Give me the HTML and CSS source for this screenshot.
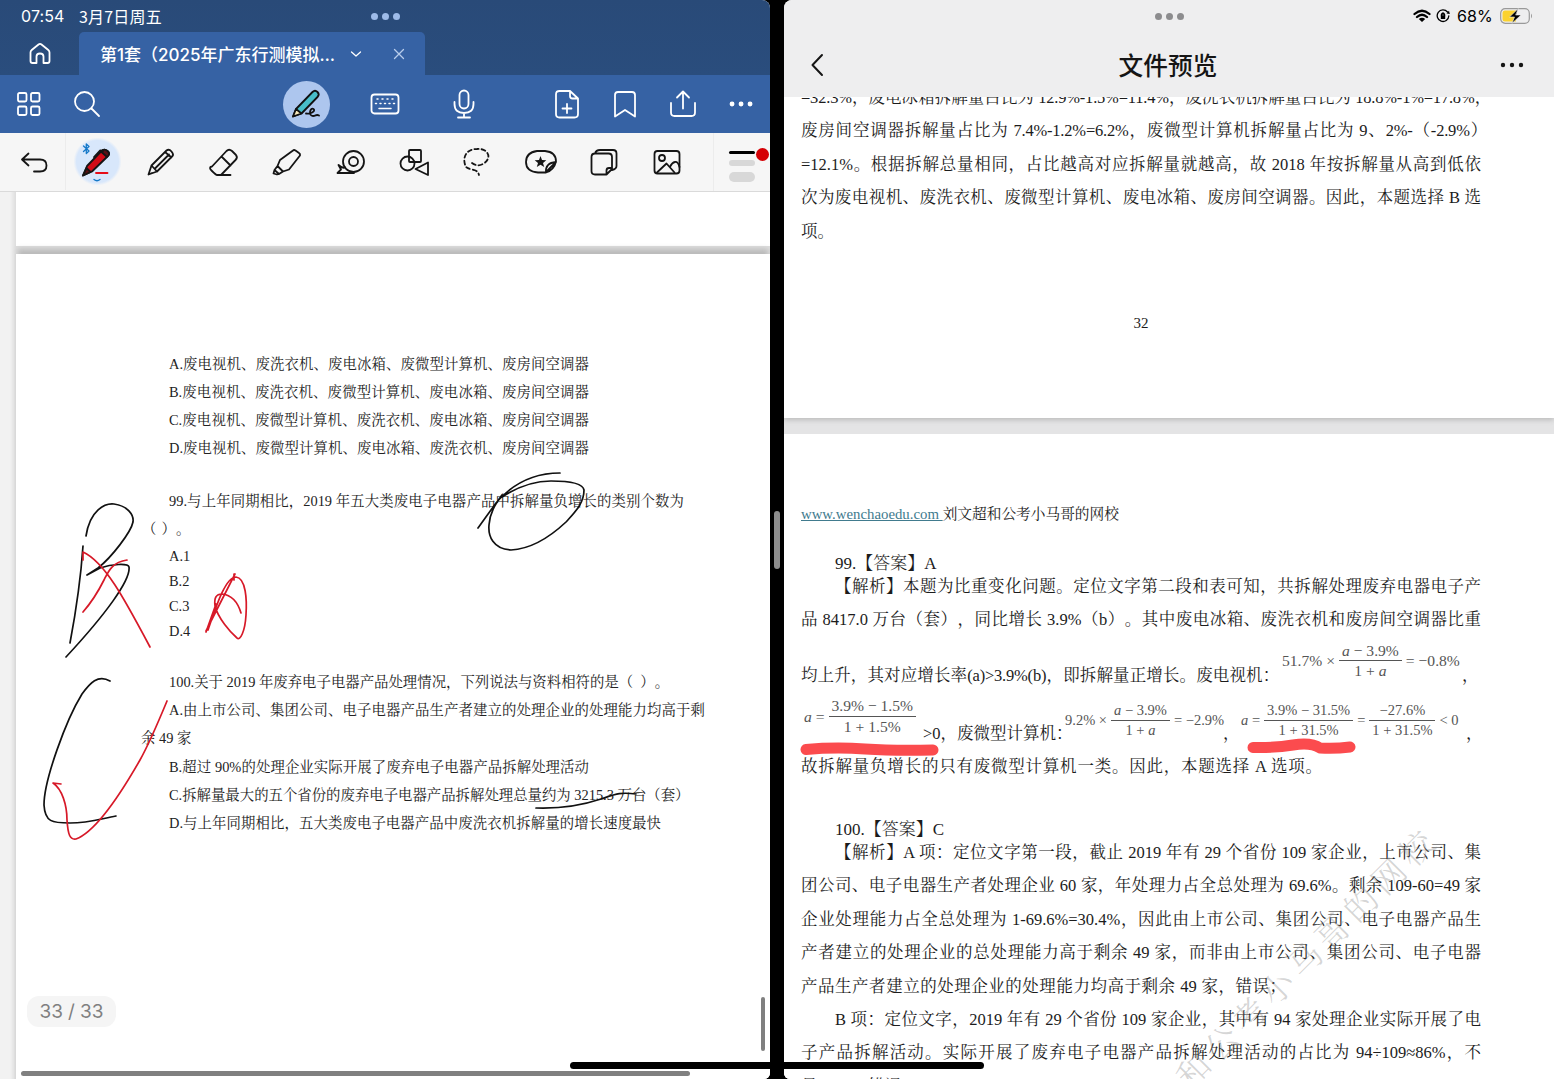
FILE: index.html
```html
<!DOCTYPE html>
<html lang="zh-CN">
<head>
<meta charset="utf-8">
<title>文件预览</title>
<link rel="stylesheet" href="styles.css">
</head>
<body>
<main class="split">
  <section class="pane notes">
    <header class="notes-head">
      <div class="status"><span class="time">07:54</span><span class="date">3月7日周五</span><span class="grip"><i></i><i></i><i></i></span></div>
      <nav class="tabs">
        <span class="home"><svg width="24" height="24" viewBox="0 0 24 24"><path d="M2.500 10.500Q2.500 9 3.700 8L10.500 2.500Q12 1.400 13.500 2.500L20.300 8Q21.500 9 21.500 10.500V19Q21.500 21 19.500 21H15.500V14.500Q15.500 11.500 12 11.500T8.500 14.500V21H4.500Q2.500 21 2.500 19Z"/></svg></span>
        <div class="tab"><span class="tab-title">第1套（2025年广东行测模拟…</span>
          <svg width="12" height="12" viewBox="0 0 12 12"><path d="M1.500 4L6 8L10.500 4"/></svg>
          <svg class="close" width="12" height="12" viewBox="0 0 12 12"><path d="M1.500 1.500L10.500 10.500M10.500 1.500L1.500 10.500"/></svg>
        </div>
      </nav>
    </header>
    <div class="bar">
      <div class="group">
        <span><svg width="36" height="36" viewBox="0 0 36 36"><rect x="7" y="7" width="8.500" height="8.500" rx="1.500"/><rect x="20" y="7" width="8.500" height="8.500" rx="1.500"/><rect x="7" y="20.500" width="8.500" height="8.500" rx="1.500"/><rect x="20" y="20.500" width="8.500" height="8.500" rx="1.500"/></svg></span>
        <span><svg width="36" height="36" viewBox="0 0 36 36"><circle cx="15.500" cy="15.500" r="9.500"/><path d="M22.500 22.500L30 30"/></svg></span>
      </div>
      <div class="group modes">
        <span><b class="active"><svg width="36" height="36" viewBox="0 0 36 36"><path class="cyan" d="M8 23L24.500 6Q27 3.500 29.500 6T29.500 11L13.500 27.500L5 30.500Z"/><path class="cream" d="M8 23L13.500 27.500L5 30.500Z"/><path class="dark" d="M18 27.500C23 28 28 25 25.500 23C22 21 20 30 25 30C28 30 28 28 31 29.500"/></svg></b></span>
        <span><svg width="36" height="36" viewBox="0 0 36 36"><rect x="4.500" y="8.500" width="27" height="19" rx="3"/><path d="M10 13h1M15 13h1M20 13h1M25 13h1M8.500 17.500h1M13 17.500h1M17.500 17.500h1M22 17.500h1M26.500 17.500h1M12 22.500H24" stroke-width="1.500"/></svg></span>
        <span><svg width="36" height="36" viewBox="0 0 36 36"><rect x="13.500" y="4.500" width="9" height="18" rx="4.500"/><path d="M8.500 16V18Q8.500 27 18 27T27.500 18V16M18 27V31.500M12 31.500H24"/></svg></span>
      </div>
      <div class="group">
        <span><svg width="36" height="36" viewBox="0 0 36 36"><path d="M21 5H10.500Q7 5 7 8.500V28Q7 31.500 10.500 31.500H25.500Q29 31.500 29 28V12.500L21 5V10Q21 12.500 23.500 12.500H29M18 18V27M13.500 22.500H22.500"/></svg></span>
        <span><svg width="36" height="36" viewBox="0 0 36 36"><path d="M8 30.500V9Q8 6 11 6H25Q28 6 28 9V30.500L18 24Z"/></svg></span>
        <span><svg width="36" height="36" viewBox="0 0 36 36"><path d="M18 22.500V6M12 11.500L18 5.500L24 11.500M6 17V26.500Q6 30 9.500 30H26.500Q30 30 30 26.500V17"/></svg></span>
        <span><svg width="36" height="36" viewBox="0 0 36 36"><path d="M9 18h.1M18 18h.1M27 18h.1" stroke-width="4.800"/></svg></span>
      </div>
    </div>
    <div class="tools">
      <span><svg width="36" height="36" viewBox="0 0 36 36"><path d="M12.500 9.500L6 15.500L12.500 21.500M6 15.500H24Q30.500 15.500 30.500 21.500T24 27.500H18"/></svg></span>
      <span class="selected"><svg width="44" height="44" viewBox="0 0 44 44"><path class="redpen" d="M8 35.500L12 26L26 11.500Q29 8 32.500 11T32 17L17 31.500Z"/><path class="cap" d="M8 35.500L11.500 28L15.500 32ZM26 11.500Q29 8 32.500 11T32 17Z"/><path class="clip" d="M19 17L25 10.500L28 11"/><path class="redline" d="M21 33H32.500"/><path class="blue" d="M8.500 6L14 11L11.300 13.500V4L14 6.500L8.500 11.500M19 39.500Q22 42 25 39.500"/></svg></span>
      <span><svg width="36" height="36" viewBox="0 0 36 36"><path d="M5.500 30.500L8.500 21.500L23.500 6.500Q26 4.500 28.500 7.500T29.500 12L14 27.500ZM8.500 21.500L14 27.500M12 24.500L26 10.500M22 8L28.500 13.500M5.500 30.500L9 29"/></svg></span>
      <span><svg width="36" height="36" viewBox="0 0 36 36"><path d="M11 31Q10 31 6 27T6 22.500L20.500 7Q23 4.500 26 7L30 11Q32 13.500 29.500 16L15 31ZM15.500 12.500L24.500 21.500M11 31H24.500"/></svg></span>
      <span><svg width="36" height="36" viewBox="0 0 36 36"><path d="M8.500 22L14 27.500L20 25.500L31 11.500Q31.500 10 30 9L26.500 6.500Q25 5.500 24 6.500L11 16ZM8.500 22L5.500 26L10 30L14 27.500M5.500 26L4.500 29.500L8 30.500L10 30M11 16L8.500 22"/></svg></span>
      <span><svg width="36" height="36" viewBox="0 0 36 36"><circle cx="20.500" cy="17.500" r="10.500"/><circle cx="20.500" cy="17.500" r="4.500"/><path d="M12 23.500Q9 24.500 5.500 21L8 25.500L4.500 29H21"/></svg></span>
      <span><svg width="36" height="36" viewBox="0 0 36 36"><rect x="13" y="6" width="12" height="12" rx="1"/><circle cx="11.500" cy="19.500" r="7"/><path d="M19.500 25L32 18.500V31Z"/></svg></span>
      <span><svg width="36" height="36" viewBox="0 0 36 36"><path stroke-dasharray="4 3" d="M13 19Q18 23 24 20C34 14 29 4 18 5C6 5 3 15 7 23Q10 25 15 26Q19 27 20 31"/></svg></span>
      <span><svg width="36" height="36" viewBox="0 0 36 36"><path d="M23 28.500H15Q3 27.500 3 18T14 7H22Q33 8 33 17.500Q31 26 23 28.500Q22 19 33 18M23 28L32 19"/><path class="solid" d="M17.500 12L19 16L23.300 16.200L20 19L21.200 23L17.500 20.700L13.800 23L15 19L11.700 16.200L16 16Z"/></svg></span>
      <span><svg width="36" height="36" viewBox="0 0 36 36"><path d="M20.500 30.500H9Q5.500 30.500 5.500 27V13Q5.500 9.500 9 9.500H22.500Q26 9.500 26 13V25ZM26 24H23Q20.500 24 20.500 26.500V30.500M9 9.500Q10 6 14 6H27Q30.500 6 30.500 9.500V22Q30.500 25 26 26"/></svg></span>
      <span><svg width="36" height="36" viewBox="0 0 36 36"><rect x="5.500" y="7" width="25" height="22.500" rx="3"/><circle cx="13" cy="14" r="3"/><path d="M8 28.500L17.500 19.500L25.500 28.500M21 23Q23 18.500 26 18T30.500 23"/></svg></span>
      <div class="strokes"><i></i><i></i><i></i><b></b></div>
    </div>
    <div class="canvas">
      <div class="sheet first"></div>
      <article class="sheet second">
        <div class="choices">
          <p class="fit">A.废电视机、废洗衣机、废电冰箱、废微型计算机、废房间空调器</p>
          <p class="fit">B.废电视机、废洗衣机、废微型计算机、废电冰箱、废房间空调器</p>
          <p class="fit">C.废电视机、废微型计算机、废洗衣机、废电冰箱、废房间空调器</p>
          <p class="fit">D.废电视机、废微型计算机、废电冰箱、废洗衣机、废房间空调器</p>
        </div>
        <div class="q99">
          <p class="fit stem">99.与上年同期相比，2019 年五大类废电子电器产品中拆解量负增长的类别个数为</p>
          <p class="outdent">（&nbsp; ）。</p>
          <div class="short"><p>A.1</p><p>B.2</p><p>C.3</p><p>D.4</p></div>
        </div>
        <div class="q100">
          <p class="fit stem">100.关于 2019 年废弃电子电器产品处理情况，下列说法与资料相符的是（&nbsp; ）。</p>
          <p class="fit wide">A.由上市公司、集团公司、电子电器产品生产者建立的处理企业的处理能力均高于剩</p>
          <p class="outdent">余 49 家</p>
          <p class="fit">B.超过 90%的处理企业实际开展了废弃电子电器产品拆解处理活动</p>
          <p class="fit opt-c">C.拆解量最大的五个省份的废弃电子电器产品拆解处理总量约为 3215.3 万台（套）</p>
          <p class="fit opt-d">D.与上年同期相比，五大类废电子电器产品中废洗衣机拆解量的增长速度最快</p>
        </div>
      </article>
    </div>
    <svg class="ink" width="770" height="1079" viewBox="0 0 770 1079">
      <g class="pen">
        <path d="M83 546Q80 590 70 643M86 536C90 510 105 503 114 504C128 506 134 515 133 522C131 532 112 557 98 568L87 575L100 568C112 564 128 563 129 567C131 580 105 615 66 657"/>
        <path d="M110 681C98 674 90 683 82 694C66 720 44 780 44 805C45 822 52 823 70 823C88 823 100 819 116 816"/>
        <path d="M478 528L496 503C513 483 533 473 560 473M502 497C522 484 540 481 551 481C572 481 583 484 584 490C584 504 574 513 566 522C550 537 530 549 511 550C493 549 488 536 489 525C490 512 495 505 502 495"/>
        <path d="M536 808C565 809 586 804 601 799S620 792 636 794"/>
      </g>
      <g class="pen red">
        <path d="M83 560L83 552C105 562 125 600 150 647M127 560C112 562 108 572 104 580C98 592 90 604 83 612"/>
        <path d="M206 631L235 574M208 630C215 610 225 577 236 577C246 578 247 600 246 615C245 632 240 641 237 638C230 632 218 618 215 606C214 598 216 594 222 594C232 595 238 603 241 613M206 632L216 604M234 580V574"/>
        <path d="M61 784L53 783C62 789 67 805 67 820C68 835 70 840 76 839C95 832 120 795 140 760C150 742 155 730 167 701"/>
      </g>
    </svg>
    <div class="counter">33 / 33</div>
    <i class="scroll-y"></i><i class="scroll-x"></i>
  </section>
  <div class="divider"><i></i></div>
  <section class="pane preview">
    <header class="preview-head">
      <div class="preview-status"><span class="grip"><i></i><i></i><i></i></span>
        <div class="system">
          <svg width="18" height="14" viewBox="0 0 18 14"><path d="M1.500 5Q9-1.500 16.500 5M4 8Q9 3.500 14 8" fill="none" stroke="#000" stroke-width="2.300"/><path d="M9 13L5.800 10Q9 7.500 12.200 10Z"/></svg>
          <svg width="14" height="14" viewBox="0 0 14 14"><path d="M11.500 3A5.800 5.800 0 1 0 12.800 7" fill="none" stroke="#000" stroke-width="1.300"/><path d="M10.500 4.500L13.800 5L13 1.800ZM4.800 6.500H9.200V10H4.800Z"/><path d="M5.700 7V5.500Q7 3 8.300 5.500V7" fill="none" stroke="#000"/></svg>
          <span>68%</span>
          <svg width="33" height="16" viewBox="0 0 33 16"><rect x=".7" y=".7" width="28.600" height="14.600" rx="4.500" fill="none" stroke="#999" stroke-width="1.200"/><path d="M5 2.500H16V13.500H5Q2.500 13.500 2.500 11V5Q2.500 2.500 5 2.500Z" fill="#fbd22e"/><path d="M18 .8L9.500 9H14.500L12 15.300L21 7H16Z" stroke="#eee" stroke-width=".6"/><path d="M31 5.500Q33 8 31 10.500Z" fill="#999"/></svg>
        </div>
      </div>
      <div class="title-row"><svg width="16" height="26" viewBox="0 0 16 26"><path d="M13 3L3.500 13L13 23"/></svg><h1>文件预览</h1><svg width="26" height="26" viewBox="0 0 26 26"><g fill="#151515" stroke="none"><circle cx="4" cy="13" r="2.200"/><circle cx="13" cy="13" r="2.200"/><circle cx="22" cy="13" r="2.200"/></g></svg></div>
    </header>
    <div class="reader">
      <article class="leaf top">
        <p class="fit over">=32.3%，废电冰箱拆解量占比为 12.9%-1.5%=11.4%，废洗衣机拆解量占比为 18.8%-1%=17.8%，</p>
        <p class="fit over">废房间空调器拆解量占比为 7.4%-1.2%=6.2%，废微型计算机拆解量占比为 9、2%-（-2.9%）</p>
        <p class="fit">=12.1%。根据拆解总量相同，占比越高对应拆解量就越高，故 2018 年按拆解量从高到低依</p>
        <p class="fit">次为废电视机、废洗衣机、废微型计算机、废电冰箱、废房间空调器。因此，本题选择 B 选</p>
        <p>项。</p>
        <div class="folio">32</div>
      </article>
      <article class="leaf next">
        <p class="source"><a>www.wenchaoedu.com </a>刘文超和公考小马哥的网校</p>
        <h2>99.【答案】A</h2>
        <p class="fit indent">【解析】本题为比重变化问题。定位文字第二段和表可知，共拆解处理废弃电器电子产</p>
        <p class="fit">品 8417.0 万台（套），同比增长 3.9%（b）。其中废电冰箱、废洗衣机和废房间空调器比重</p>
        <div class="math-row one">
          <p class="fit">均上升，其对应增长率(a)&gt;3.9%(b)，即拆解量正增长。废电视机：</p>
          <div class="math"><span>51.7% ×</span><span class="frac"><span><i>a</i> − 3.9%</span><span>1 + <i>a</i></span></span><span>= −0.8%</span></div>
          <p>，</p>
        </div>
        <div class="math-row two">
          <div class="math"><span><i>a</i> =</span><span class="frac"><span>3.9% − 1.5%</span><span>1 + 1.5%</span></span></div>
          <p class="fit">&gt;0，废微型计算机：</p>
          <div class="math small"><span>9.2% ×</span><span class="frac"><span><i>a</i> − 3.9%</span><span>1 + <i>a</i></span></span><span>= −2.9%</span></div>
          <p>，</p>
          <div class="math small"><span><i>a</i> =</span><span class="frac"><span>3.9% − 31.5%</span><span>1 + 31.5%</span></span><span>=</span><span class="frac"><span>−27.6%</span><span>1 + 31.5%</span></span><span>&lt; 0</span></div>
          <p>，</p>
        </div>
        <p class="fit ending">故拆解量负增长的只有废微型计算机一类。因此，本题选择 A 选项。</p>
        <h2 class="later">100.【答案】C</h2>
        <p class="fit indent">【解析】A 项：定位文字第一段，截止 2019 年有 29 个省份 109 家企业，上市公司、集</p>
        <p class="fit">团公司、电子电器生产者处理企业 60 家，年处理力占全总处理为 69.6%。剩余 109-60=49 家</p>
        <p class="fit">企业处理能力占全总处理为 1-69.6%=30.4%，因此由上市公司、集团公司、电子电器产品生</p>
        <p class="fit">产者建立的处理企业的总处理能力高于剩余 49 家，而非由上市公司、集团公司、电子电器</p>
        <p class="fit wrong">产品生产者建立的处理企业的处理能力均高于剩余 49 家，错误；</p>
        <p class="fit indent">B 项：定位文字，2019 年有 29 个省份 109 家企业，其中有 94 家处理企业实际开展了电</p>
        <p class="fit">子产品拆解活动。实际开展了废弃电子电器产品拆解处理活动的占比为 94÷109≈86%，不</p>
        <p>是 91%，错误。</p>
      </article>
    </div>
    <svg class="ink" width="770" height="1079" viewBox="784 0 770 1079">
      <text class="watermark" text-anchor="end" transform="translate(1441 841) rotate(-45)">刘文超和公考小马哥的网校</text>
      <path class="marker" d="M806 749.500Q835 747 865 749T933 750M1253 747.500Q1275 748 1293 745T1320 748Q1335 749 1350 747"/>
    </svg>
  </section>
</main>
<i class="home-indicator"></i>
</body>
</html>
```
FILE: styles.css
```css
* { box-sizing: border-box; }
body { margin: 0; width: 1554px; height: 1079px; overflow: hidden; background: #000; font-family: "Inter", "Noto Sans CJK SC", sans-serif; }
p, h1, h2 { margin: 0; font-weight: 400; white-space: nowrap; }
svg { display: block; flex: none; fill: none; stroke: #fff; stroke-width: 1.8; stroke-linecap: round; stroke-linejoin: round; }
.split { display: flex; height: 1079px; }
.pane { position: relative; width: 770px; height: 1079px; overflow: hidden; border-radius: 6px 8px 6px 6px; display: flex; flex-direction: column; background: #fff; }
.notes { border-radius: 0 8px 6px 0; }
.preview { border-radius: 8px 0 0 6px; }
.divider { width: 14px; display: flex; align-items: center; justify-content: center; }
.divider i { width: 6px; height: 58px; border-radius: 3px; background: #8d8d8d; }
.grip { display: flex; gap: 4px; }
.grip i { width: 7px; height: 7px; border-radius: 50%; background: #9dbbe9; }

/* note app chrome */
.notes-head { flex: none; height: 75px; background: linear-gradient(#294a78, #2a4d7d); color: #fff; }
.status { height: 32px; padding-left: 21px; display: grid; grid-template-columns: 58px 292px 1fr; align-items: center; font-size: 16px; }
.time { letter-spacing: .1px; }
.date { font-size: 16px; letter-spacing: .2px; font-family: "Noto Sans CJK SC", sans-serif; }
.tabs { display: flex; height: 43px; }
.home { width: 79px; display: grid; place-items: center; }
.tab { width: 346px; padding: 0 20px 0 21px; background: #3662a4; border-radius: 5px 5px 0 0; display: flex; align-items: center; }
.tab-title { width: 250px; font: 500 17px "Inter", "Noto Sans CJK SC", sans-serif; white-space: nowrap; }
.tab svg { stroke-width: 1.3; }
.tab .close { margin-left: 31px; stroke: #b8cdec; }
.bar { flex: none; height: 58px; background: #3662a4; display: flex; justify-content: space-between; }
.group { display: flex; }
.group span { width: 58px; display: grid; place-items: center; }
.modes { margin-left: 116px; }
.modes span { width: 79px; }
.group:first-child + .modes { margin-left: 0; transform: translateX(58px); }
.active { width: 47px; height: 47px; border-radius: 50%; background: #adc6ee; display: grid; place-items: center; }
.cyan { fill: #48bdc9; stroke: #111; }
.cream { fill: #f8eabb; stroke: #111; }
.dark { stroke: #111; }
.tools { flex: none; height: 59px; padding-left: 2.5px; background: #f6f6f6; border-bottom: 1px solid #dadada; display: flex; }
.tools span { width: 63.3px; height: 57px; display: grid; place-items: center; }
.tools span:first-child { border-right: 1px solid #ececec; }
.tools svg { stroke: #151515; }
.tools .selected { background: radial-gradient(circle, #d8e7fb 0 21px, #f6f6f600 24px); }
.tools .redpen { fill: #d20b16; }
.tools .cap { fill: #5a1014; }
.tools .redline { stroke: #e60d18; }
.tools .blue { stroke: #1478c8; stroke-width: 1.3; }
.tools .solid { fill: #151515; stroke: none; }
.strokes { flex: 1; border-left: 1px solid #ececec; margin-left: 14px; display: grid; grid-template-columns: 26px 13px; grid-template-rows: 3px 6px 10px; gap: 6px 1px; padding: 18px 0 0 15px; }
.strokes i { grid-column: 1; border-radius: 5px; background: #d8d8d8; }
.strokes i:first-child { background: #000; }
.strokes b { grid-column: 2; grid-row: 1; align-self: center; position: relative; top: 2px; width: 13px; height: 13px; border-radius: 50%; background: #d50005; }
.canvas { flex: 1; min-height: 0; padding-left: 16px; background: linear-gradient(90deg, #f2f2f2 0 10px, #ddd 16px); }
.sheet { background: #fff; font: 14.4px/28px "Liberation Serif", "Noto Serif CJK SC", "Noto Sans CJK SC", serif; color: #222; font-weight: 300; text-spacing-trim: space-all; }
.first { height: 54px; }
.second { margin-top: 8px; height: 840px; padding: 96px 0 0 153px; box-shadow: 0 -7px 5px -2px #bbb; }
.fit { text-align: justify; text-align-last: justify; }
.sheet .fit { width: 420px; }
.q99 { margin-top: 25px; }
.sheet .q99 .stem { width: 515px; }
.outdent { margin-left: -28px; }
.q99 .outdent { margin-left: -27px; word-spacing: -1px; }
.short { padding-top: 1px; line-height: 25px; }
.q100 { margin-top: 24px; line-height: 28.2px; }
.sheet .q100 .stem { width: 497px; }
.sheet .wide { width: 536px; }
.sheet .opt-c { width: 519px; }
.sheet .opt-d { width: 492px; }
.ink { position: absolute; inset: 0; pointer-events: none; }
.pen { stroke: #111; stroke-width: 1.7; }
.red { stroke: #d71928; }
.counter { position: absolute; left: 27px; top: 996px; width: 89px; height: 31px; border-radius: 12px; background: #f5f5f5; color: #808080; font-size: 19px; line-height: 31px; text-align: center; letter-spacing: -.1px; }
.scroll-y { position: absolute; left: 761px; top: 997px; width: 4px; height: 54px; border-radius: 2px; background: #808080; }
.scroll-x { position: absolute; left: 21px; top: 1071px; width: 669px; height: 5px; border-radius: 3px; background: #808080; }

/* document preview */
.preview-head { position: relative; z-index: 2; height: 97px; flex: none; background: #eeeeef; }
.preview-status { height: 32px; display: grid; grid-template-columns: 371px 258px 1fr; align-items: center; }
.preview-status .grip { grid-column: 2; }
.preview-status .grip i { background: #8c8c8e; }
.system { display: flex; align-items: center; gap: 5px; font-size: 16px; }
.system svg { stroke: none; fill: #000; }
.system span { width: 39px; margin-left: 2px; margin-right: -1px; letter-spacing: .1px; }
.title-row { height: 65px; padding: 0 29px 0 25px; display: grid; grid-template-columns: 16px 1fr 26px; align-items: center; }
.title-row svg { stroke: #151515; stroke-width: 2; }
h1 { padding-left: 12px; font: 500 24.7px/36px "Noto Sans CJK SC", sans-serif; text-align: center; color: #151515; position: relative; top: -1px; }
.reader { flex: 1; min-height: 0; background: #e4e4e5; font: 16.5px/33.4px "Liberation Serif", "Noto Serif CJK SC", "Noto Sans CJK SC", serif; color: #1c1c1c; font-weight: 300; text-spacing-trim: space-all; }
.leaf { background: #fff; padding-left: 17px; }
.leaf .fit { width: 680px; }
.top { margin-top: -16px; height: 337px; box-shadow: 0 2px 5px #bbb; }
.leaf .over { width: 690px; letter-spacing: -.2px; }
.leaf .over + .over { width: 686px; }
.folio { width: 680px; text-align: center; font-size: 15px; margin-top: 59px; }
.next { margin-top: 16px; height: 645px; overflow: hidden; padding-top: 64px; }
.source { font-size: 14.7px; height: 59px; }
.source a { color: #417b8e; text-decoration: underline; font-size: 14.8px; white-space: pre; }
h2 { font: inherit; font-size: 17px; line-height: 13px; padding-left: 34px; }
.leaf .indent { padding-left: 34px; }
.math-row { display: grid; align-items: end; }
.one { height: 55.6px; grid-template-columns: 478px 183px 19px; }
.one .fit { width: 478px; letter-spacing: -.2px; }
.two { height: 57.6px; grid-template-columns: 122px 139px 161px 15px 228px 15px; }
.leaf .math-row .fit { width: 100%; }
.math { display: flex; align-items: center; gap: 4px; line-height: 19.5px; font-size: 15.6px; color: #555; white-space: nowrap; align-self: start; padding: 4px 0 0 3px; }
.frac { display: flex; flex-direction: column; text-align: center; }
.frac > span { padding: 0 3px; }
.frac > span:first-child { border-bottom: 1px solid #555; }
.two .math { padding-top: 4px; }
.math.small { font-size: 14.5px; gap: 4px; line-height: 18.5px; }
.two .math.small { padding-top: 9px; }
.leaf .ending { width: 521px; }
.later { margin-top: 39.5px; }
.leaf .wrong { width: 485px; }
.watermark { font: 300 33px "Liberation Serif", "Noto Serif CJK SC", "Noto Sans CJK SC", serif; letter-spacing: 6.3px; fill: #888; fill-opacity: .36; stroke: none; }
.marker { stroke: #fb4b4e; stroke-width: 11; }
.home-indicator { position: absolute; left: 570px; top: 1062px; width: 414px; height: 7px; border-radius: 4px; background: #000; }
```
